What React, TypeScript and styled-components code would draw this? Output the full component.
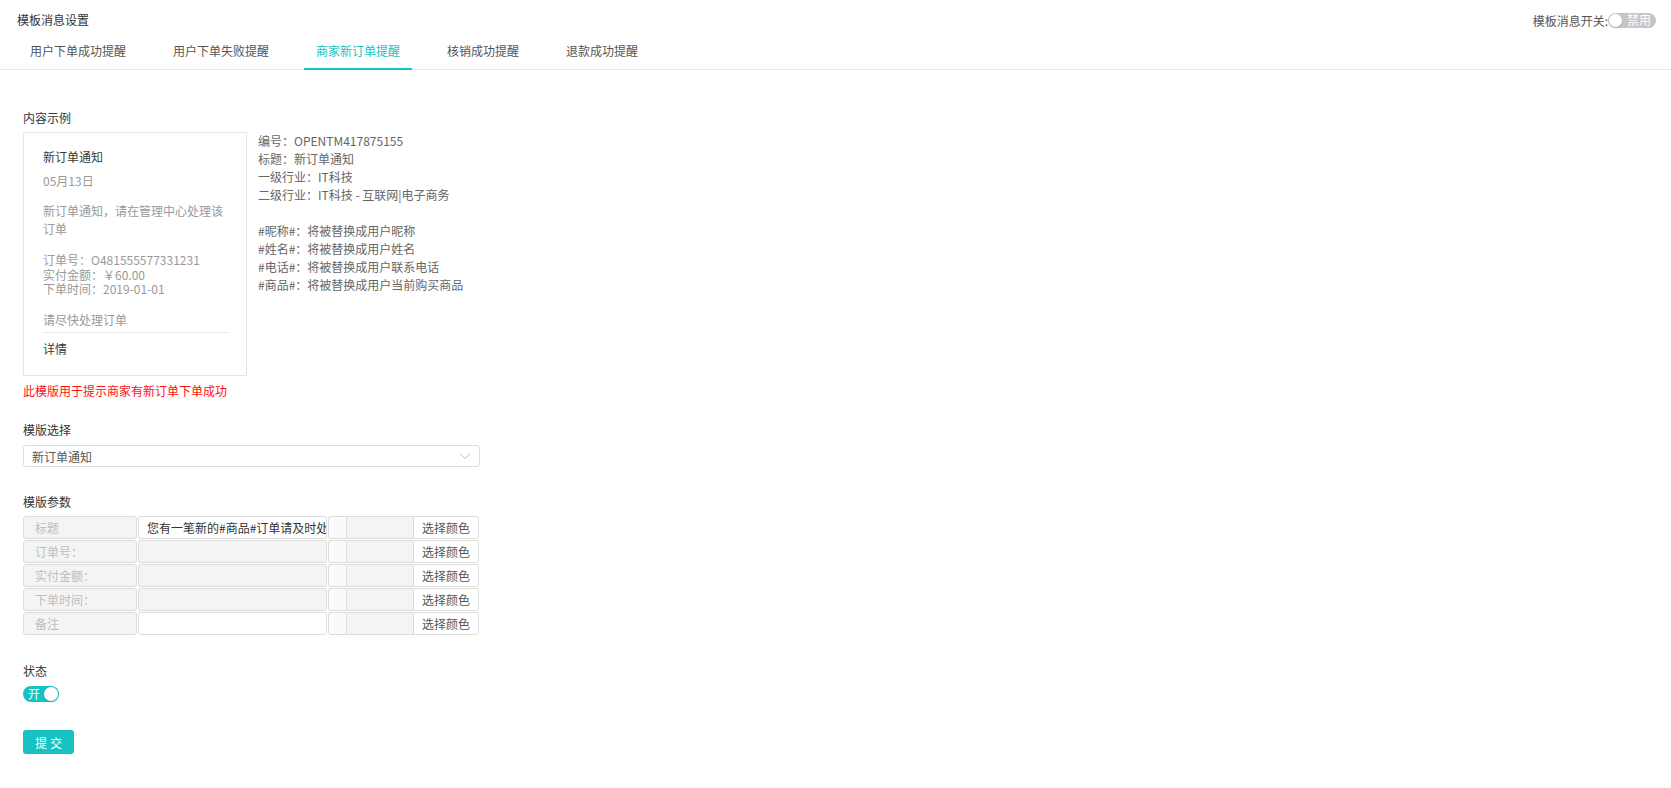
import React, { useState } from 'react'
import styled, { createGlobalStyle } from 'styled-components'

const TEAL = '#17c2c2'

const GlobalStyle = createGlobalStyle`
  html, body {
    margin: 0;
    padding: 0;
    background: #fff;
  }
  body {
    font-family: "Noto Sans CJK SC", "Noto Sans", sans-serif;
    font-size: 12px;
    color: #333;
  }
  * { box-sizing: border-box; }
`

const Page = styled.div`
  width: 1671px;
  min-height: 788px;
`

const Header = styled.div`
  border-bottom: 1px solid #e4e7ed;
  padding: 10px 15px 0 17px;
`

const TitleRow = styled.div`
  display: flex;
  justify-content: space-between;
  align-items: center;
  height: 20px;
`

const Title = styled.div`
  color: #333;
  line-height: 20px;
`

const SwitchLabel = styled.div`
  display: flex;
  align-items: center;
  color: #555;
`

const Tabs = styled.div`
  display: flex;
  gap: 23px;
  margin-top: 3px;
  margin-left: 1px;
`

const Tab = styled.div<{ $active?: boolean }>`
  padding: 0 12px;
  height: 36px;
  line-height: 36px;
  color: ${p => (p.$active ? TEAL : '#555')};
  position: relative;
  cursor: pointer;
  &::after {
    content: '';
    position: absolute;
    left: 0;
    right: 0;
    bottom: -1px;
    height: 2px;
    background: ${p => (p.$active ? TEAL : 'transparent')};
  }
`

const Toggle = styled.div<{ $on?: boolean; $w: number; $h: number }>`
  width: ${p => p.$w}px;
  height: ${p => p.$h}px;
  border-radius: ${p => p.$h / 2}px;
  background: ${p => (p.$on ? TEAL : '#c6c6c6')};
  display: flex;
  flex-direction: ${p => (p.$on ? 'row' : 'row-reverse')};
  align-items: center;
  justify-content: space-between;
  padding: 0 1px 0 ${p => (p.$on ? 5 : 1)}px;
  color: #fff;
  font-size: 12px;
  cursor: pointer;
  ${p => (!p.$on ? 'padding-right: 5px;' : '')}
`

const Knob = styled.span<{ $size: number }>`
  width: ${p => p.$size}px;
  height: ${p => p.$size}px;
  border-radius: 50%;
  background: #fff;
  box-shadow: 0 1px 2px rgba(0, 0, 0, 0.15);
  flex-shrink: 0;
`

const ToggleText = styled.span`
  line-height: 1;
`

const Content = styled.div`
  padding: 39px 23px 0 23px;
`

const Label = styled.div<{ $gap?: number }>`
  line-height: 18px;
  color: #333;
  margin-top: ${p => p.$gap ?? 0}px;
`

const ExampleRow = styled.div`
  display: flex;
  align-items: flex-start;
  gap: 11px;
  margin-top: 5px;
`

const Card = styled.div`
  width: 224px;
  height: 244px;
  border: 1px solid #e6e6e6;
  padding: 15px 16px 0 19px;
`

const CardLine = styled.div<{ $dark?: boolean; $gap?: number; $lh?: number }>`
  color: ${p => (p.$dark ? '#3a3a3a' : '#999')};
  line-height: ${p => p.$lh ?? 18}px;
  margin-top: ${p => p.$gap ?? 0}px;
`

const CardDivider = styled.div`
  height: 1px;
  background: #ececec;
  margin-top: 3px;
`

const Info = styled.div`
  color: #666;
  line-height: 18px;
  white-space: pre;
`

const Hint = styled.div`
  color: #ff1010;
  line-height: 18px;
  margin-top: 6px;
`

const Select = styled.div`
  width: 457px;
  height: 22px;
  border: 1px solid #dcdcdc;
  border-radius: 3px;
  display: flex;
  align-items: center;
  justify-content: space-between;
  padding: 0 8px 0 8px;
  color: #555;
  margin-top: 6px;
`

const Params = styled.div`
  display: flex;
  flex-direction: column;
  gap: 1px;
  margin-top: 5px;
`

const ParamRow = styled.div`
  display: flex;
  height: 23px;
`

const Cell = styled.div<{ $w: number; $bg?: string }>`
  width: ${p => p.$w}px;
  height: 23px;
  border: 1px solid #dcdcdc;
  border-radius: 3px;
  background: ${p => p.$bg ?? '#fff'};
`

const LabelCell = styled(Cell)`
  color: #bdbdbd;
  line-height: 21px;
  padding-left: 11px;
  margin-right: 1px;
`

const InputCell = styled.input<{ $disabled?: boolean }>`
  width: 189px;
  height: 23px;
  border: 1px solid #dcdcdc;
  border-radius: 3px;
  background: ${p => (p.$disabled ? '#f4f4f4' : '#fff')};
  font: inherit;
  color: #333;
  padding: 0 0 0 8px;
  margin: 0 1px 0 0;
  outline: none;
`

const Swatch = styled(Cell)`
  border-radius: 3px 0 0 3px;
  background: #fafafa;
`

const ColorValue = styled(Cell)`
  border-left: none;
  border-right: none;
  border-radius: 0;
`

const ColorButton = styled.button`
  width: 66px;
  height: 23px;
  border: 1px solid #dcdcdc;
  border-radius: 0 3px 3px 0;
  background: #fff;
  font: inherit;
  color: #555;
  padding: 0;
  cursor: pointer;
`

const Submit = styled.button`
  width: 51px;
  height: 24px;
  border: none;
  border-radius: 3px;
  background: ${TEAL};
  color: #fff;
  font: inherit;
  letter-spacing: 3px;
  padding: 0 0 0 3px;
  margin-top: 28px;
  cursor: pointer;
`

const tabs = ['用户下单成功提醒', '用户下单失败提醒', '商家新订单提醒', '核销成功提醒', '退款成功提醒']

const info = `编号：OPENTM417875155
标题：新订单通知
一级行业：IT科技
二级行业：IT科技 - 互联网|电子商务

#昵称#：将被替换成用户昵称
#姓名#：将被替换成用户姓名
#电话#：将被替换成用户联系电话
#商品#：将被替换成用户当前购买商品`

const params = [
  { label: '标题', value: '您有一笔新的#商品#订单请及时处理', disabled: false },
  { label: '订单号：', value: '', disabled: true },
  { label: '实付金额：', value: '', disabled: true },
  { label: '下单时间：', value: '', disabled: true },
  { label: '备注', value: '', disabled: false },
]

const Chevron = () => (
  <svg width="12" height="8" viewBox="0 0 12 8">
    <path d="M1 1.5 L6 6.5 L11 1.5" fill="none" stroke="#bbb" strokeWidth="1" />
  </svg>
)

export default function App() {
  const [active, setActive] = useState(2)
  const [status, setStatus] = useState(true)

  return (
    <Page>
      <GlobalStyle />
      <Header>
        <TitleRow>
          <Title>模板消息设置</Title>
          <SwitchLabel>
            模板消息开关:
            <Toggle $w={48} $h={15}>
              <ToggleText>禁用</ToggleText>
              <Knob $size={13} />
            </Toggle>
          </SwitchLabel>
        </TitleRow>
        <Tabs>
          {tabs.map((t, i) => (
            <Tab key={t} $active={i === active} onClick={() => setActive(i)}>
              {t}
            </Tab>
          ))}
        </Tabs>
      </Header>

      <Content>
        <Label>内容示例</Label>
        <ExampleRow>
          <Card>
            <CardLine $dark>新订单通知</CardLine>
            <CardLine $gap={6}>05月13日</CardLine>
            <CardLine $gap={12}>新订单通知，请在管理中心处理该订单</CardLine>
            <CardLine $gap={15} $lh={14.5}>订单号：O481555577331231</CardLine>
            <CardLine $lh={14.5}>实付金额：￥60.00</CardLine>
            <CardLine $lh={14.5}>下单时间：2019-01-01</CardLine>
            <CardLine $gap={14}>请尽快处理订单</CardLine>
            <CardDivider />
            <CardLine $dark $gap={7}>详情</CardLine>
          </Card>
          <Info>{info}</Info>
        </ExampleRow>
        <Hint>此模版用于提示商家有新订单下单成功</Hint>

        <Label $gap={21}>模版选择</Label>
        <Select>
          <span>新订单通知</span>
          <Chevron />
        </Select>

        <Label $gap={26}>模版参数</Label>
        <Params>
          {params.map(p => (
            <ParamRow key={p.label}>
              <LabelCell $w={114} $bg="#f4f4f4">{p.label}</LabelCell>
              <InputCell readOnly $disabled={p.disabled} value={p.value} />
              <Swatch $w={19} />
              <ColorValue $w={66} $bg="#f4f4f4" />
              <ColorButton>选择颜色</ColorButton>
            </ParamRow>
          ))}
        </Params>

        <Label $gap={27}>状态</Label>
        <div style={{ marginTop: 6 }}>
          <Toggle $on={status} $w={36} $h={16} onClick={() => setStatus(!status)}>
            <ToggleText>{status ? '开' : '关'}</ToggleText>
            <Knob $size={14} />
          </Toggle>
        </div>
        <Submit>提交</Submit>
      </Content>
    </Page>
  )
}
